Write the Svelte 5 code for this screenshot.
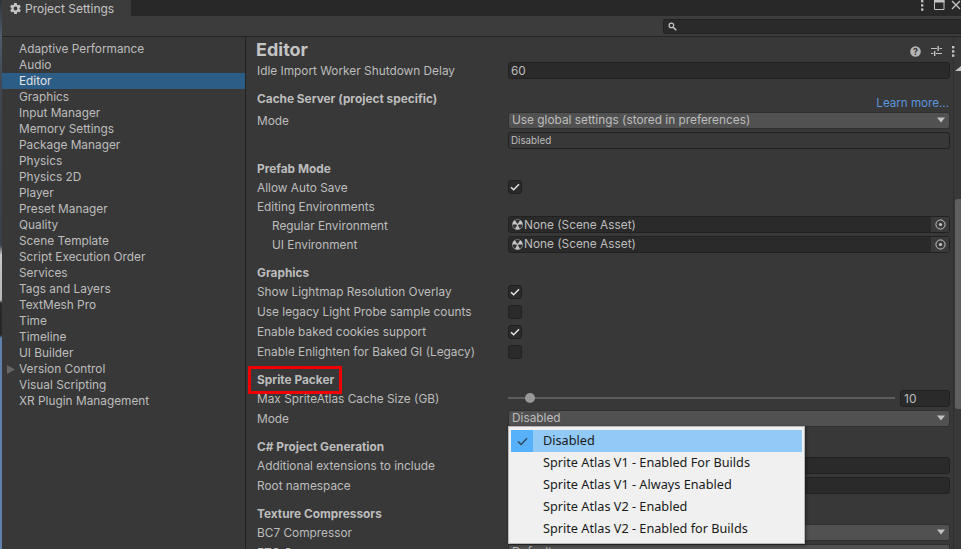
<script lang="ts">
	const categories = [
		'Adaptive Performance', 'Audio', 'Editor', 'Graphics', 'Input Manager', 'Memory Settings',
		'Package Manager', 'Physics', 'Physics 2D', 'Player', 'Preset Manager', 'Quality',
		'Scene Template', 'Script Execution Order', 'Services', 'Tags and Layers', 'TextMesh Pro',
		'Time', 'Timeline', 'UI Builder', 'Version Control', 'Visual Scripting', 'XR Plugin Management'
	];

	const popupItems = [
		'Disabled',
		'Sprite Atlas V1 - Enabled For Builds',
		'Sprite Atlas V1 - Always Enabled',
		'Sprite Atlas V2 - Enabled',
		'Sprite Atlas V2 - Enabled for Builds'
	];

	// kind: text | small | drop | check | asset | none | slider
	const sections = [
		{
			title: 'Cache Server (project specific)',
			link: 'Learn more...',
			rows: [
				{ label: 'Mode', kind: 'drop', value: 'Use global settings (stored in preferences)' },
				{ label: '', kind: 'small', value: 'Disabled' }
			]
		},
		{
			title: 'Prefab Mode',
			rows: [
				{ label: 'Allow Auto Save', kind: 'check', on: true, short: true },
				{ label: 'Editing Environments', kind: 'none', short: true },
				{ label: 'Regular Environment', kind: 'asset', value: 'None (Scene Asset)', indent: true, short: true },
				{ label: 'UI Environment', kind: 'asset', value: 'None (Scene Asset)', indent: true }
			]
		},
		{
			title: 'Graphics',
			rows: [
				{ label: 'Show Lightmap Resolution Overlay', kind: 'check', on: true },
				{ label: 'Use legacy Light Probe sample counts', kind: 'check', on: false },
				{ label: 'Enable baked cookies support', kind: 'check', on: true },
				{ label: 'Enable Enlighten for Baked GI (Legacy)', kind: 'check', on: false }
			]
		},
		{
			title: 'Sprite Packer',
			marked: true,
			rows: [
				{ label: 'Max SpriteAtlas Cache Size (GB)', kind: 'slider', value: '10' },
				{ label: 'Mode', kind: 'drop', value: 'Disabled' }
			]
		},
		{
			title: 'C# Project Generation',
			rows: [
				{ label: 'Additional extensions to include', kind: 'text', value: '' },
				{ label: 'Root namespace', kind: 'text', value: '' }
			]
		},
		{
			title: 'Texture Compressors',
			rows: [
				{ label: 'BC7 Compressor', kind: 'drop', value: 'Default' },
				{ label: 'ETC Compressor', kind: 'drop', value: 'Default' }
			]
		}
	];
</script>

{#snippet arrow()}
	<svg class="arrow" width="10" height="6" viewBox="0 0 10 6"><path d="M1 0.5h8L5 5.5z" fill="#c2c2c2" /></svg>
{/snippet}

{#snippet kebab(color)}
	<svg width="3" height="11" viewBox="0 0 3 11" fill={color}>
		<rect x="0" y="0" width="2.4" height="2.4" /><rect x="0" y="4.2" width="2.4" height="2.4" /><rect x="0" y="8.4" width="2.4" height="2.4" />
	</svg>
{/snippet}

<div class="window">
	<div class="edge"></div>
	<div class="main">
		<div class="tabbar">
			<div class="tab">
				<svg width="13" height="13" viewBox="0 0 24 24"><path fill="#c4c4c4" d="M19.4 13a7.6 7.6 0 0 0 0-2l2.1-1.6a.5.5 0 0 0 .1-.7l-2-3.4a.5.5 0 0 0-.6-.2l-2.5 1a7.3 7.3 0 0 0-1.7-1l-.4-2.6a.5.5 0 0 0-.5-.5h-4a.5.5 0 0 0-.5.5l-.4 2.6a7.3 7.3 0 0 0-1.7 1l-2.5-1a.5.5 0 0 0-.6.2l-2 3.4a.5.5 0 0 0 .1.7L4.6 11a7.6 7.6 0 0 0 0 2l-2.1 1.6a.5.5 0 0 0-.1.7l2 3.4c.1.2.4.3.6.2l2.5-1c.5.4 1.1.7 1.7 1l.4 2.6c0 .3.2.5.5.5h4c.3 0 .5-.2.5-.5l.4-2.6c.6-.3 1.2-.6 1.7-1l2.5 1c.2.1.5 0 .6-.2l2-3.4a.5.5 0 0 0-.1-.7zM12 15.5a3.5 3.5 0 1 1 0-7 3.5 3.5 0 0 1 0 7z" /></svg>
				<span>Project Settings</span>
			</div>
			<div class="win-buttons">
				{@render kebab('#bdbdbd')}
				<svg class="maxi" width="11" height="10" viewBox="0 0 11 10"><path d="M.5.5h9.5v9H.5z" fill="none" stroke="#c4c4c4" /><rect x="0" y="0" width="10.5" height="2.5" fill="#c4c4c4" /></svg>
				<svg width="10" height="10" viewBox="0 0 10 10"><path d="M1 1l8 8M9 1l-8 8" stroke="#c4c4c4" stroke-width="1.3" /></svg>
			</div>
		</div>

		<div class="toolbar">
			<div class="search">
				<svg width="9" height="9" viewBox="0 0 9 9"><circle cx="3.4" cy="3.4" r="2.3" fill="none" stroke="#c8c8c8" stroke-width="1.2" /><path d="M5.2 5.2L8.3 8.3" stroke="#c8c8c8" stroke-width="1.6" /></svg>
			</div>
		</div>

		<div class="body">
			<nav class="sidebar">
				{#each categories as name}
					<div class="cat" class:selected={name === 'Editor'}>
						{#if name === 'Version Control'}
							<svg class="fold" width="8" height="9" viewBox="0 0 8 9"><path d="M0 0l8 4.5L0 9z" fill="#666" /></svg>
						{/if}
						{name}
					</div>
				{/each}
			</nav>

			<div class="content">
				<div class="pane">
					<div class="titlebar">
						<h1>Editor</h1>
						<div class="title-icons">
							<svg width="11" height="11" viewBox="0 0 11 11"><circle cx="5.5" cy="5.5" r="5.3" fill="#b4b4b4" /><text x="5.5" y="8.8" text-anchor="middle" font-size="9" font-weight="700" font-family="Inter" fill="#383838">?</text></svg>
							<svg width="11" height="10" viewBox="0 0 11 10"><path d="M0 2.5h6M8.5 2.5H11M0 7.5h2.5M5 7.5h6" stroke="#c4c4c4" stroke-width="1.2" /><path d="M7.2 0v5M3.7 5v5" stroke="#c4c4c4" stroke-width="1.4" /></svg>
							{@render kebab('#c4c4c4')}
						</div>
					</div>

					<div class="row first">
						<span class="label">Idle Import Worker Shutdown Delay</span>
						<div class="field text">60</div>
					</div>

					{#each sections as section}
						<section>
							<div class="heading" class:linked={section.link}>
								<span class="heading-text">
									{section.title}
									{#if section.marked}<span class="marker"></span>{/if}
								</span>
								{#if section.link}<span class="link">{section.link}</span>{/if}
							</div>
							{#each section.rows as row}
								<div class="row" class:short={row.short}>
									<span class="label" class:indent={row.indent}>{row.label}</span>
									{#if row.kind === 'drop'}
										<div class="field drop"><span>{row.value}</span>{@render arrow()}</div>
									{:else if row.kind === 'small'}
										<div class="field small">{row.value}</div>
									{:else if row.kind === 'text'}
										<div class="field text">{row.value}</div>
									{:else if row.kind === 'check'}
										<div class="checkbox">
											{#if row.on}
												<svg width="10" height="8" viewBox="0 0 10 8"><path d="M1 4.2l2.6 2.5L9 1.2" fill="none" stroke="#e4e4e4" stroke-width="1.5" /></svg>
											{/if}
										</div>
									{:else if row.kind === 'asset'}
										<div class="field asset">
											<svg width="11" height="11" viewBox="0 0 11 11">
												<circle cx="5.5" cy="5.5" r="5.3" fill="#c4c4c4" />
												<path d="M5.5 5.5L3 1.2A5 5 0 0 1 8 1.2zM5.5 5.5L10.5 5.6A5 5 0 0 1 8 9.9zM5.5 5.5L3 9.9A5 5 0 0 1 .5 5.6z" fill="#333" />
												<circle cx="5.5" cy="5.5" r="1" fill="#c4c4c4" />
											</svg>
											<span>{row.value}</span>
											<div class="picker">
												<svg width="11" height="11" viewBox="0 0 11 11"><circle cx="5.5" cy="5.5" r="4.6" fill="none" stroke="#c4c4c4" stroke-width="1" /><circle cx="5.5" cy="5.5" r="1.6" fill="#c4c4c4" /></svg>
											</div>
										</div>
									{:else if row.kind === 'slider'}
										<div class="slider">
											<div class="track"><div class="knob"></div></div>
											<div class="field number">{row.value}</div>
										</div>
									{/if}
								</div>
							{/each}
						</section>
					{/each}
				</div>

				<div class="scrollbar">
					<svg width="6" height="5" viewBox="0 0 6 5"><path d="M6 0v5H0z" fill="#c2c2c2" /></svg>
					<div class="thumb"></div>
				</div>

				<div class="popup">
					{#each popupItems as item, i}
						<div class="popup-item" class:current={i === 0}>
							<div class="tick">
								{#if i === 0}
									<svg width="11" height="9" viewBox="0 0 11 9"><path d="M1 4.5l3.2 3L10 1.2" fill="none" stroke="#34465a" stroke-width="1.4" /></svg>
								{/if}
							</div>
							<span>{item}</span>
						</div>
					{/each}
				</div>
			</div>
		</div>
	</div>
</div>

<style>
	:global(body) {
		margin: 0;
		background: #383838;
		overflow: hidden;
	}

	.window {
		display: flex;
		width: 961px;
		height: 549px;
		overflow: hidden;
		font-family: Inter, 'Liberation Sans', sans-serif;
		font-size: 11.85px;
		color: #bdbdbd;
	}

	/* sliver of the desktop behind the window */
	.edge {
		width: 2px;
		flex-shrink: 0;
		background: linear-gradient(
			to bottom,
			#30343a 0,
			#4e5c6e 36px,
			#3e4650 90px,
			#39404a 245px,
			#c8c8c8 255px,
			#b8b8b8 300px,
			#2a2a2a 303px,
			#252525 335px,
			#5f80ad 338px,
			#5f80ad 549px
		);
	}

	.main {
		flex: 1;
		min-width: 0;
		display: flex;
		flex-direction: column;
	}

	.tabbar {
		height: 16px;
		flex-shrink: 0;
		display: flex;
		justify-content: space-between;
		background: #282828;
	}

	.tab {
		width: 129px;
		display: flex;
		align-items: center;
		gap: 3px;
		padding-left: 7px;
		box-sizing: border-box;
		background: #3c3c3c;
		color: #c4c4c4;
		font-size: 12px;
	}

	.win-buttons {
		display: flex;
		align-items: flex-start;
		gap: 6px;
	}

	.maxi {
		margin-left: 4px;
	}

	.toolbar {
		height: 20px;
		flex-shrink: 0;
		display: flex;
		justify-content: flex-end;
		align-items: center;
		background: #3c3c3c;
		border-bottom: 1px solid #232323;
	}

	.search {
		width: 298px;
		height: 15px;
		display: flex;
		align-items: center;
		padding-left: 4px;
		box-sizing: border-box;
		background: #2a2a2a;
		border: 1px solid #212121;
		border-right: none;
		border-radius: 3px 0 0 3px;
	}

	.body {
		flex: 1;
		min-height: 0;
		display: flex;
	}

	.sidebar {
		width: 243px;
		flex-shrink: 0;
		padding-top: 4px;
		background: #383838;
		border-right: 1px solid #232323;
	}

	.cat {
		position: relative;
		height: 16px;
		line-height: 16px;
		padding-left: 17px;
	}

	.cat.selected {
		background: #2c5d87;
		color: #e4e4e4;
	}

	.fold {
		position: absolute;
		left: 5px;
		top: 4px;
	}

	.content {
		flex: 1;
		min-width: 0;
		position: relative;
		display: flex;
	}

	.pane {
		flex: 1;
		min-width: 0;
		padding: 0 3px 0 11px;
	}

	.titlebar {
		height: 24px;
		display: flex;
		justify-content: space-between;
		align-items: center;
	}

	h1 {
		margin: 0 0 0 -1px;
		font-size: 18px;
		font-weight: 700;
		color: #c4c4c4;
	}

	.title-icons {
		display: flex;
		align-items: center;
		gap: 10px;
		margin: 4px -5px 0 0;
		position: relative;
		z-index: 1;
	}

	section {
		padding-top: 8px;
	}

	.heading {
		height: 19px;
		line-height: 21px;
		display: flex;
		justify-content: space-between;
		font-weight: 700;
	}

	.heading.linked {
		height: 22px;
	}

	.heading-text {
		position: relative;
		height: 19px;
	}

	.link {
		align-self: flex-end;
		height: 19px;
		line-height: 22px;
		font-size: 11.6px;
		font-weight: 400;
		color: #5d95dd;
		margin-right: 1px;
	}

	.marker {
		position: absolute;
		left: -9px;
		top: -4px;
		right: -8px;
		bottom: -5px;
		border: 3px solid #f00000;
	}

	.row {
		height: 20px;
		display: flex;
		align-items: center;
	}

	.row.short {
		height: 19px;
	}

	.label {
		width: 251px;
		flex-shrink: 0;
		white-space: nowrap;
	}

	.label.indent {
		padding-left: 15px;
		width: 236px;
	}

	.field {
		flex: 1;
		height: 17px;
		box-sizing: border-box;
		display: flex;
		align-items: center;
		padding: 0 2px;
		margin-top: -2px;
		border: 1px solid #212121;
		border-radius: 3px;
		background: #2a2a2a;
		white-space: nowrap;
	}

	.text {
		padding-top: 1px;
	}

	.drop {
		justify-content: space-between;
		background: #515151;
		border-color: #303030;
		padding: 0 3px;
	}

	.small {
		font-size: 9.8px;
		background: #383838;
		padding-left: 2px;
	}

	.asset {
		gap: 1px;
		padding: 0 0 0 3px;
	}

	.picker {
		margin-left: auto;
		width: 18px;
		height: 15px;
		display: flex;
		align-items: center;
		justify-content: center;
		background: #3a3a3a;
	}

	.checkbox {
		width: 14px;
		height: 14px;
		box-sizing: border-box;
		display: flex;
		align-items: center;
		justify-content: center;
		background: #2a2a2a;
		border: 1px solid #212121;
		border-radius: 3px;
		margin-top: -1px;
	}

	.slider {
		flex: 1;
		display: flex;
		align-items: center;
		gap: 5px;
	}

	.track {
		flex: 1;
		position: relative;
		height: 2px;
		background: #5e5e5e;
		margin-top: -2px;
	}

	.knob {
		position: absolute;
		left: 17px;
		top: -4px;
		width: 10px;
		height: 10px;
		border-radius: 50%;
		background: #999;
	}

	.number {
		flex: 0 0 50px;
		padding-left: 3px;
		font-size: 12px;
	}

	.scrollbar {
		width: 8px;
		flex-shrink: 0;
		padding-top: 29px;
		box-sizing: border-box;
		display: flex;
		flex-direction: column;
		align-items: flex-end;
		border-left: 1px solid #2f2f2f;
	}

	.thumb {
		width: 6px;
		height: 210px;
		margin-top: 128px;
		border-radius: 3px 0 0 3px;
		background: #5f5f5f;
	}

	.popup {
		position: absolute;
		left: 262px;
		top: 389px;
		width: 297px;
		padding: 3px 2px;
		box-sizing: border-box;
		background: #f0f0f0;
		border: 1px solid #b8b8b8;
		box-shadow: 1px 1px 3px rgba(0, 0, 0, 0.45);
		font-family: 'Noto Sans', sans-serif;
		font-size: 12.7px;
		color: #1a1a1a;
	}

	.popup-item {
		height: 22px;
		display: flex;
		align-items: center;
	}

	.popup-item span {
		margin-top: -2px;
	}

	.popup-item.current {
		background: #91c9f7;
	}

	.tick {
		width: 22px;
		height: 22px;
		margin-right: 10px;
		display: flex;
		align-items: center;
		justify-content: center;
	}

	.current .tick {
		background: #56b0fa;
	}
</style>
